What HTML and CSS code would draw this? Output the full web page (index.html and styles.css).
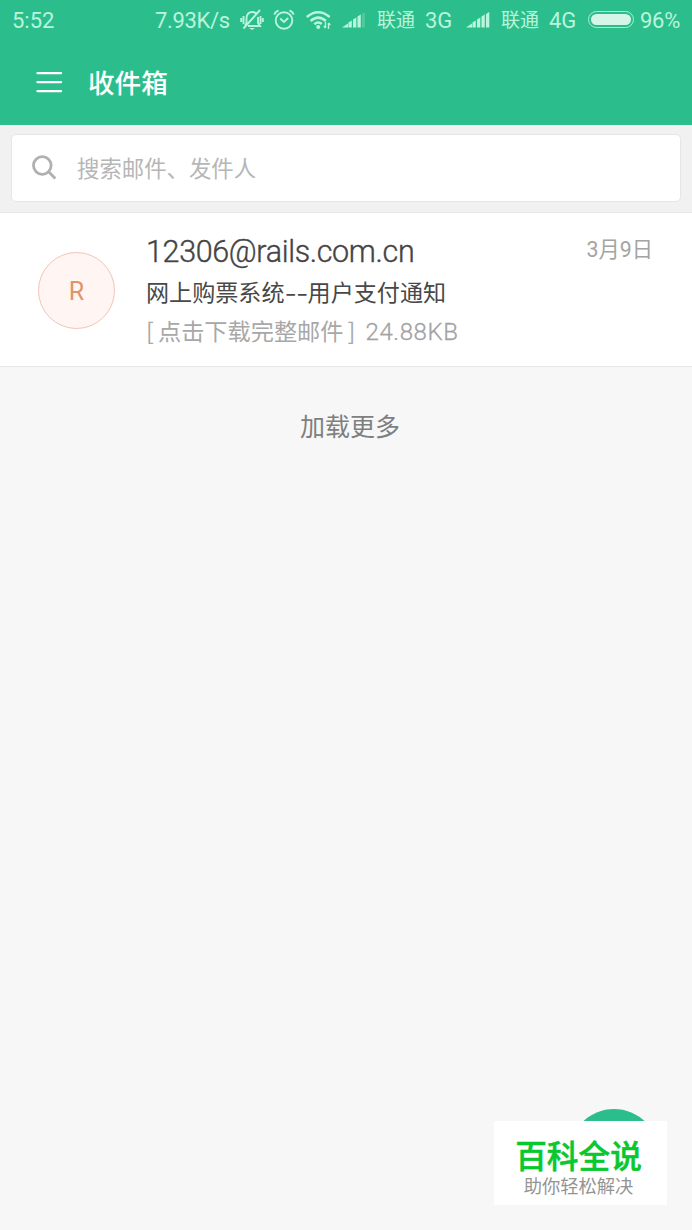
FILE: index.html
```html
<!DOCTYPE html>
<html lang="zh-CN">
<head>
<meta charset="utf-8">
<title>收件箱</title>
<link rel="stylesheet" href="styles.css">
</head>
<body>
<div class="screen">
  <header class="top">
    <div class="status">
      <span class="time">5:52</span>
      <span class="speed">7.93K/s</span>
      <svg class="bell" width="24" height="22" viewBox="0 0 24 22" fill="none" stroke="currentColor" stroke-width="1.9"><path d="M5 16.5 6.500 14V9Q7 3.500 11.500 3Q15 2.500 17 5.500M18 8v6l2 3H8M3.500 7v8M20.500 7v8M1.200 9v4M22.800 9v4M3.500 19.500 20 1"/><path d="M9 19h6l-3 2z" fill="currentColor" stroke="none"/></svg>
      <svg class="alarm" width="22" height="22" viewBox="0 0 22 22" fill="none" stroke="currentColor" stroke-width="1.900"><circle cx="11" cy="11.500" r="8.300"/><path d="M7.200 9.500 11 13l4.200-4M1.200 5.500Q2.500 2.500 5.500 1.500M20.800 5.500Q19.500 2.500 16.500 1.500"/></svg>
      <svg class="wifi" width="26" height="20" viewBox="0 0 26 20" fill="none" stroke="currentColor" stroke-width="2.500"><path d="M.8 7Q12.200-2.600 23.700 7M4.600 11Q12.200 4.200 19.900 11M8.300 14.300Q12.200 11 15.700 14"/><circle cx="12.200" cy="17" r="2" fill="currentColor" stroke="none"/><path d="M19.500 12v6M17.800 16l1.700 2M22.500 19v-6M22.500 13l1.800 2" stroke-width="1.400"/></svg>
      <svg class="signal" width="24" height="18" viewBox="0 0 24 18" fill="currentColor"><path d="M0 16.500 6 12.500v4zM6.500 11.500l3.300-2v7H6.500zM11 8.500l3.300-2v10H11zM15.500 5.500l3.300-2v13h-3.300z"/><path d="M20 3l2.800-2v15.500H20z" opacity=".25"/></svg>
      <span class="carrier">联通</span>
      <span class="net">3G</span>
      <svg class="signal second" width="24" height="18" viewBox="0 0 24 18" fill="currentColor"><path d="M0 16.500 6 12.500v4zM6.500 11.500l3.300-2v7H6.500zM11 8.500l3.300-2v10H11zM15.500 5.500l3.300-2v13h-3.300zM20 3l3.300-2v15.500H20z"/></svg>
      <span class="carrier">联通</span>
      <span class="net">4G</span>
      <span class="battery"><i class="charge"></i></span>
      <span class="percent">96%</span>
    </div>
    <div class="bar">
      <svg class="menu" width="28" height="24" viewBox="0 0 28 24" stroke="#fff" stroke-width="2.300" stroke-linecap="round"><path d="M2.500 2.200h23.500M2.500 11.200h23.500M2.500 20.200h23.500"/></svg>
      <h1 class="title">收件箱</h1>
    </div>
  </header>
  <div class="searchbar">
    <div class="search">
      <svg width="26" height="26" viewBox="0 0 26 26" fill="none" stroke="#b0b0b0" stroke-width="2.800"><circle cx="10.300" cy="10.500" r="8.800"/><path d="M16.600 16.800 23.300 23.500"/></svg>
      <span class="hint">搜索邮件、发件人</span>
    </div>
  </div>
  <article class="mail">
    <div class="avatar">R</div>
    <div class="body">
      <div class="line">
        <span class="sender">12306@rails.com.cn</span>
        <span class="date">3月9日</span>
      </div>
      <div class="subject">网上购票系统<span class="dash">--</span>用户支付通知</div>
      <div class="summary"><span class="open">[</span><span class="sumtext">点击下载完整邮件</span><span class="close">]</span><span class="size">24.88KB</span></div>
    </div>
  </article>
  <div class="more">加载更多</div>
  <div class="fab"></div>
  <aside class="brand">
    <strong class="name">百科全说</strong>
    <span class="slogan">助你轻松解决</span>
  </aside>
</div>
</body>
</html>
```
FILE: styles.css
```css
* { box-sizing: border-box; }
body { margin: 0; background: #f7f7f7; font-family: "Noto Sans CJK SC", sans-serif; }
.screen { position: relative; width: 692px; height: 1230px; overflow: hidden; background: #f7f7f7; }
.top { height: 125px; background: #2bbe8c; }
.status { display: flex; align-items: center; height: 40px; padding-left: 12px; color: #b9f5dc; font: 22px/40px Roboto, "Noto Sans CJK SC", sans-serif; white-space: nowrap; }
.status svg { flex: none; }
.status span { padding-top: 1px; }
.time { width: 143px; }
.speed { width: 85px; letter-spacing: -.35px; }
.bell { margin-right: 9px; }
.alarm { margin-right: 11px; }
.wifi { margin-right: 10px; }
.signal { margin-right: 11px; }
.signal.second { margin-right: 11px; }
.carrier { width: 48px; font-size: 19px; }
.net { width: 41px; }
.second ~ .net { width: 39px; }
.status .battery { flex: none; width: 46px; height: 17px; margin: -2px 6px 0 0; padding: 2px; border: 1px solid #a9f0d2; border-radius: 9px; }
.charge { display: block; width: 40px; height: 11px; border-radius: 6px; background: #d5f5e8; }
.percent { width: 42px; letter-spacing: -.3px; }
.bar { display: flex; align-items: center; height: 85px; padding-left: 35px; }
.menu { margin-right: 25px; }
.title { margin: -2px 0 0; color: #fff; font-size: 26.600px; line-height: 40px; font-weight: 500; }
.searchbar { height: 88px; padding: 9px 11px; background: #f1f1f1; border-bottom: 1px solid #e9e9e9; }
.search { display: flex; align-items: center; height: 68px; padding-left: 20px; background: #fff; border: 1px solid #e6e6e6; border-radius: 5px; }
.hint { margin: -2px 0 0 19px; color: #b6b6b6; font-size: 22.400px; line-height: 34px; }
.mail { display: flex; height: 154px; padding: 18px 39px 0 38px; background: #fff; border-bottom: 1px solid #e6e6e6; }
.avatar { width: 77px; height: 77px; margin: 21px 31px 0 0; border: 1px solid #f5c3b2; border-radius: 50%; background: #fff5f2; color: #de946e; font: 25px/77px Roboto, sans-serif; text-align: center; }
.body { flex: 1; white-space: nowrap; }
.line { display: flex; justify-content: space-between; height: 41px; }
.sender { color: #444; font: 300 30.500px/41px Roboto, sans-serif; letter-spacing: -.350px; -webkit-text-stroke: .4px #444; }
.date { color: #a4a4a4; font: 21.300px/38px Roboto, "Noto Sans CJK SC", sans-serif; }
.subject { color: #484848; font-size: 23.100px; line-height: 39px; height: 39px; }
.dash { display: inline-block; width: 23px; transform: scaleX(1.430); transform-origin: left; }
.summary { display: flex; color: #a8a8a8; font-size: 23.200px; line-height: 38px; }
.size { color: #a2a2a2; font: 300 24px/42px Roboto, sans-serif; letter-spacing: .6px; -webkit-text-stroke: .3px #a2a2a2; }
.more { padding: 39px 0 0 8px; color: #7f7f7f; font-size: 25px; line-height: 38px; text-align: center; }
.open { width: 12px; }
.close { margin-left: 4px; width: 18px; }
.fab { position: absolute; left: 569px; top: 1109px; width: 90px; height: 90px; border-radius: 50%; background: #2bbe8c; }
.brand { position: absolute; left: 494px; top: 1121px; width: 173px; height: 84px; padding: 13px 4px 0 0; background: #fff; text-align: center; }
.name { display: block; color: #09c82f; font-size: 31.700px; line-height: 40px; font-weight: 500; -webkit-text-stroke: .5px #09c82f; }
.slogan { display: block; color: #949494; font-size: 18.300px; line-height: 22px; }
```
